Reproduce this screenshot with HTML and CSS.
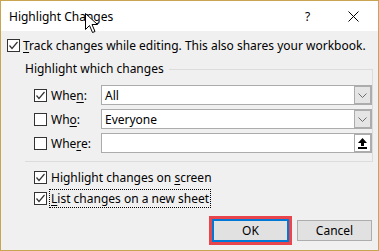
FILE: index.html
```html
<!DOCTYPE html>
<html>
<head>
<meta charset="utf-8">
<link rel="stylesheet" href="styles.css">
</head>
<body>
<div class="window">
  <div class="titlebar">
    <span class="title">Highlight Changes</span>
    <span class="help">?</span>
    <svg class="close" width="11" height="11" viewBox="0 0 11 11"><path d="M0.5 0.5L10.5 10.5M10.5 0.5L0.5 10.5" stroke="#000" stroke-width="1" fill="none"/></svg>
  </div>
  <div class="content">
    <label class="row track">
      <span class="cb checked"><svg viewBox="0 0 13 13" width="13" height="13"><path d="M2.5 6.5L5 9.5L10.5 3" stroke="#333" stroke-width="1.2" fill="none"/></svg></span>
      <span class="txt"><u>T</u>rack changes while editing. This also shares your workbook.</span>
    </label>
    <fieldset class="group">
      <legend class="group-label">Highlight which changes</legend>
      <div class="group-body">
        <div class="frow">
          <span class="cb checked"><svg viewBox="0 0 13 13" width="13" height="13"><path d="M2.5 6.5L5 9.5L10.5 3" stroke="#333" stroke-width="1.2" fill="none"/></svg></span>
          <span class="flabel">Whe<u>n</u>:</span>
          <div class="field"><span class="val">All</span><span class="btn drop"><svg width="9" height="5" viewBox="0 0 9 5"><path d="M0.5 0.5L4.5 4.5L8.5 0.5" stroke="#6d6d6d" fill="none"/></svg></span></div>
        </div>
        <div class="frow">
          <span class="cb"></span>
          <span class="flabel">Wh<u>o</u>:</span>
          <div class="field"><span class="val">Everyone</span><span class="btn drop"><svg width="9" height="5" viewBox="0 0 9 5"><path d="M0.5 0.5L4.5 4.5L8.5 0.5" stroke="#6d6d6d" fill="none"/></svg></span></div>
        </div>
        <div class="frow">
          <span class="cb"></span>
          <span class="flabel">Whe<u>r</u>e:</span>
          <div class="field"><span class="val"></span><span class="btn up"><svg width="9" height="11" viewBox="0 0 9 11"><path d="M4.5 0L9 5H6V8H3V5H0Z" fill="#000"/><rect x="0" y="9" width="9" height="2" fill="#000"/></svg></span></div>
        </div>
      </div>
    </fieldset>
    <div class="opts">
      <label class="orow">
        <span class="cb checked"><svg viewBox="0 0 13 13" width="13" height="13"><path d="M2.5 6.5L5 9.5L10.5 3" stroke="#333" stroke-width="1.2" fill="none"/></svg></span>
        <span class="txt">Highlight changes on <u>s</u>creen</span>
      </label>
      <label class="orow">
        <span class="cb checked"><svg viewBox="0 0 13 13" width="13" height="13"><path d="M2.5 6.5L5 9.5L10.5 3" stroke="#333" stroke-width="1.2" fill="none"/></svg></span>
        <span class="txt focus"><u>L</u>ist changes on a new sheet</span>
      </label>
    </div>
    <div class="buttons">
      <div class="mark"><button class="b ok">OK</button></div>
      <button class="b cancel">Cancel</button>
    </div>
  </div>
  <svg class="cursor" width="13" height="20" viewBox="0 0 13 20"><path d="M0.5 0.5V16.5L4.5 12.5L7.5 19.5L10 18.5L7 11.5H12.5Z" fill="#fff" stroke="#000" stroke-width="1"/></svg>
</div>
</body>
</html>
```
FILE: styles.css
```css
html, body { margin: 0; padding: 0; }
body { width: 379px; height: 251px; overflow: hidden; font-family: "Noto Sans", "Open Sans", sans-serif; font-size: 12px; color: #000; }
.window { position: relative; box-sizing: border-box; width: 379px; height: 251px; border: 1px solid #c9a451; background: #f0f0f0; display: flex; flex-direction: column; }
.titlebar { height: 30px; background: #fff; display: flex; align-items: center; padding-left: 8px; flex: none; }
.title { flex: 1; font-size: 12px; }
.help { width: 10px; margin-right: 33px; font-size: 12px; }
.close { margin-right: 19px; }
.content { flex: 1; display: flex; flex-direction: column; }
u { text-decoration: underline; text-underline-offset: 2px; text-decoration-thickness: 1px; }
.cb { box-sizing: border-box; width: 13px; height: 13px; border: 1px solid #333; background: #fff; flex: none; display: flex; }
.cb svg { margin: -1px; }
.row { display: flex; align-items: center; height: 20px; margin-top: 4px; padding-left: 6px; }
.row .txt { margin-left: 3px; }
.group { margin: 6px 5px 0 24px; padding: 0 0 8px 0; border: none; border-top: 1px solid #dcdcdc; border-right: 1px solid #dcdcdc; border-bottom: 1px solid #dcdcdc; min-width: 0; }
.group-label { padding: 0 5px 0 0; margin: 0; line-height: 16px; height: 16px; }
.group-body { display: flex; flex-direction: column; gap: 4px; margin-top: 8px; padding-left: 9px; }
.frow { display: flex; align-items: center; height: 20px; }
.flabel { width: 50px; margin-left: 4px; }
.field { flex: 1; height: 20px; box-sizing: border-box; border: 1px solid #acacac; background: #fff; display: flex; align-items: center; }
.val { flex: 1; padding-left: 3px; }
.btn { width: 17px; height: 18px; box-sizing: border-box; border: 1px solid #acacac; background: #e5e5e5; display: flex; align-items: center; justify-content: center; }
.btn.up { background: #fff; }
.opts { display: flex; flex-direction: column; gap: 5px; margin-top: 7px; padding-left: 33px; }
.orow { display: flex; align-items: center; height: 16px; }
.orow .txt { margin-left: 3px; padding: 0 1px; }
.focus { outline: 1px dotted #000; outline-offset: 0; }
.buttons { display: flex; justify-content: flex-end; align-items: center; gap: 5px; margin-top: 10px; padding-right: 6px; }
.mark { border: 3px solid #e8464c; }
.b { font-family: inherit; font-size: 12px; width: 75px; height: 21px; box-sizing: border-box; background: #e1e1e1; border: 1px solid #adadad; color: #000; padding: 0; margin: 0; }
.ok { border: 2px solid #0078d7; width: 77px; height: 23px; }
.cursor { position: absolute; left: 84px; top: 12px; }
```
